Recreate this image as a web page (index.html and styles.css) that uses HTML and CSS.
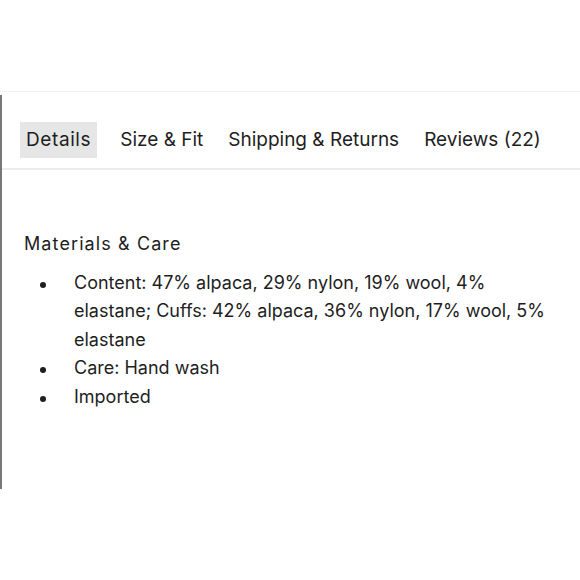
FILE: index.html
```html
<!DOCTYPE html>
<html>
<head>
<meta charset="utf-8">
<link rel="stylesheet" href="styles.css">
</head>
<body>
<div class="topline"></div>
<div class="panel">
  <nav class="tabs">
    <span class="tab active">Details</span>
    <span class="tab">Size &amp; Fit</span>
    <span class="tab">Shipping &amp; Returns</span>
    <span class="tab">Reviews (22)</span>
  </nav>
  <section class="content">
    <h2 class="heading">Materials &amp; Care</h2>
    <ul class="list">
      <li>Content: 47% alpaca, 29% nylon, 19% wool, 4% elastane; Cuffs: 42% alpaca, 36% nylon, 17% wool, 5% elastane</li>
      <li>Care: Hand wash</li>
      <li>Imported</li>
    </ul>
  </section>
</div>
</body>
</html>
```

FILE: styles.css
```css
html, body {
  margin: 0;
  padding: 0;
  background: #fff;
}
body {
  font-family: "Inter", "Noto Sans", sans-serif;
  color: #1e1e1e;
}
.topline {
  height: 91px;
  border-bottom: 1px solid #f2f2f2;
}
.panel {
  margin-top: 3px;
  height: 394px;
  border-left: 2px solid #777;
}
.tabs {
  display: flex;
  align-items: center;
  gap: 13px;
  padding: 27px 0 0 18px;
  height: 46px;
  border-bottom: 2px solid #ececec;
  font-size: 19px;
}
.tab {
  display: flex;
  align-items: center;
  height: 36px;
  padding: 0 6px;
  margin-bottom: 11px;
}
.tab.active {
  background: #e6e6e6;
  letter-spacing: 0.6px;
  margin-right: 4px;
}
.content {
  padding: 62px 25px 0 22px;
}
.heading {
  margin: 0;
  font-size: 18px;
  font-weight: 400;
  line-height: 24px;
  letter-spacing: 1.1px;
}
.list {
  list-style: none;
  margin: 13px 0 0;
  padding: 0;
  font-size: 18px;
  line-height: 28.4px;
}
.list li {
  display: flex;
}
.list li::before {
  content: "";
  flex: none;
  width: 6px;
  height: 6px;
  border-radius: 50%;
  background: #1e1e1e;
  margin: 13px 28px 0 16px;
}
```
